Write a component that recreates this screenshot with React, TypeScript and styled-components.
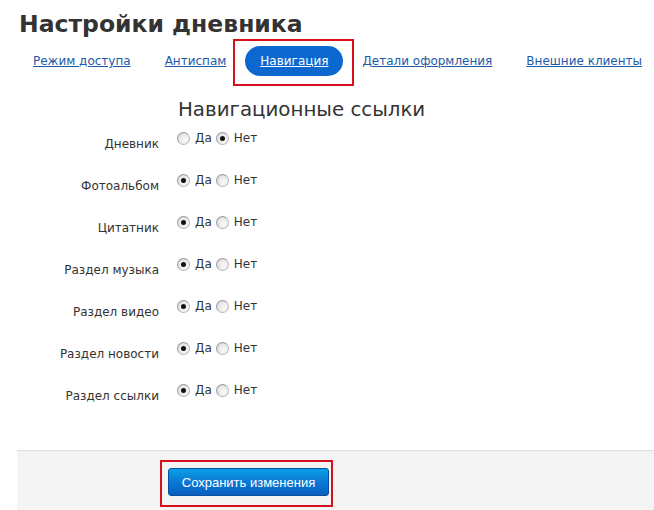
import React, { useState } from "react";
import styled, { createGlobalStyle } from "styled-components";

const Global = createGlobalStyle`
  html, body { margin: 0; padding: 0; background: #fff; }
  body { font-family: "DejaVu Sans", Verdana, sans-serif; color: #333; overflow: hidden; }
`;

const Page = styled.div`
  width: 654px;
  height: 510px;
  display: flex;
  flex-direction: column;
  overflow: hidden;
`;

const Title = styled.h1`
  margin: 9px 0 0 19px;
  font-size: 23.5px;
  line-height: 30px;
  font-weight: bold;
  color: #333;
  white-space: nowrap;
`;

const Tabs = styled.nav`
  display: flex;
  align-items: center;
  gap: 4px;
  margin: 7px 0 0 18px;
  height: 30px;
`;

const Tab = styled.a<{ $active?: boolean }>`
  position: relative;
  display: flex;
  align-items: center;
  height: 30px;
  padding: 0 15px;
  border-radius: 15px;
  font-size: 12px;
  white-space: nowrap;
  text-decoration: underline;
  cursor: pointer;
  color: ${(p) => (p.$active ? "#fff" : "#1d5aa8")};
  background: ${(p) => (p.$active ? "#0c68cf" : "transparent")};
`;

const Highlight = styled.span<{ $t: number; $r: number; $b: number; $l: number }>`
  position: absolute;
  top: ${(p) => -p.$t}px;
  right: ${(p) => -p.$r}px;
  bottom: ${(p) => -p.$b}px;
  left: ${(p) => -p.$l}px;
  border: 2px solid #d4111c;
  pointer-events: none;
`;

const Form = styled.div`
  display: grid;
  grid-template-columns: 159px 1fr;
  column-gap: 18px;
  align-items: start;
  margin-top: 22px;
`;

const Heading = styled.h2`
  grid-column: 2;
  margin: 0 0 6px 1px;
  font-size: 19.8px;
  line-height: 24px;
  font-weight: normal;
  color: #333;
  white-space: nowrap;
`;

const Label = styled.div`
  grid-column: 1;
  text-align: right;
  font-size: 12px;
  line-height: 14px;
  padding-top: 9px;
  height: 42px;
  box-sizing: border-box;
  color: #333;
  white-space: nowrap;
`;

const Controls = styled.div`
  grid-column: 2;
  display: flex;
  align-items: center;
  height: 14px;
  margin-top: 3px;
  font-size: 12px;
  color: #333;
`;

const Option = styled.label`
  display: flex;
  align-items: center;
  gap: 5px;
  margin-right: 4px;
  cursor: pointer;
`;

const Radio = styled.span<{ $checked: boolean }>`
  width: 11px;
  height: 11px;
  border-radius: 50%;
  border: 1px solid #b8b8b8;
  border-top-color: #9a9a9a;
  border-left-color: #9a9a9a;
  background: radial-gradient(circle at 65% 65%, #fafafa 0%, #e8e8e8 55%, #cfcfcf 100%);
  display: flex;
  align-items: center;
  justify-content: center;
  &::after {
    content: "";
    width: 5px;
    height: 5px;
    border-radius: 50%;
    background: #111;
    display: ${(p) => (p.$checked ? "block" : "none")};
  }
`;

const Footer = styled.div`
  margin: 28px 0 0 17px;
  flex: 1;
  background: #f4f4f4;
  border-top: 1px solid #dcdcdc;
  padding: 17px 0 0 151px;
`;

const SaveButton = styled.button`
  position: relative;
  width: 161px;
  height: 28px;
  border: 1px solid #0a4f9e;
  border-radius: 3px;
  background: linear-gradient(#0aa0e6, #0a78d6 50%, #0a5fbf);
  color: #fff;
  font-family: "Liberation Sans", Arial, sans-serif;
  font-size: 13px;
  padding: 0;
  cursor: pointer;
`;

const tabs = ["Режим доступа", "Антиспам", "Навигация", "Детали оформления", "Внешние клиенты"];

const rows: [string, boolean][] = [
  ["Дневник", false],
  ["Фотоальбом", true],
  ["Цитатник", true],
  ["Раздел музыка", true],
  ["Раздел видео", true],
  ["Раздел новости", true],
  ["Раздел ссылки", true],
];

export default function App() {
  const [values, setValues] = useState<boolean[]>(rows.map((r) => r[1]));
  const set = (i: number, v: boolean) =>
    setValues((old) => old.map((x, j) => (j === i ? v : x)));

  return (
    <Page>
      <Global />
      <Title>Настройки дневника</Title>
      <Tabs>
        {tabs.map((t) => (
          <Tab key={t} $active={t === "Навигация"}>
            {t}
            {t === "Навигация" && <Highlight $t={7} $r={11} $b={10} $l={12} />}
          </Tab>
        ))}
      </Tabs>
      <Form>
        <Heading>Навигационные ссылки</Heading>
        {rows.map(([name], i) => (
          <React.Fragment key={name}>
            <Label>{name}</Label>
            <Controls>
              <Option onClick={() => set(i, true)}>
                <Radio $checked={values[i]} />
                Да
              </Option>
              <Option onClick={() => set(i, false)}>
                <Radio $checked={!values[i]} />
                Нет
              </Option>
            </Controls>
          </React.Fragment>
        ))}
      </Form>
      <Footer>
        <SaveButton>
          Сохранить изменения
          <Highlight $t={9} $r={5} $b={12} $l={9} />
        </SaveButton>
      </Footer>
    </Page>
  );
}
